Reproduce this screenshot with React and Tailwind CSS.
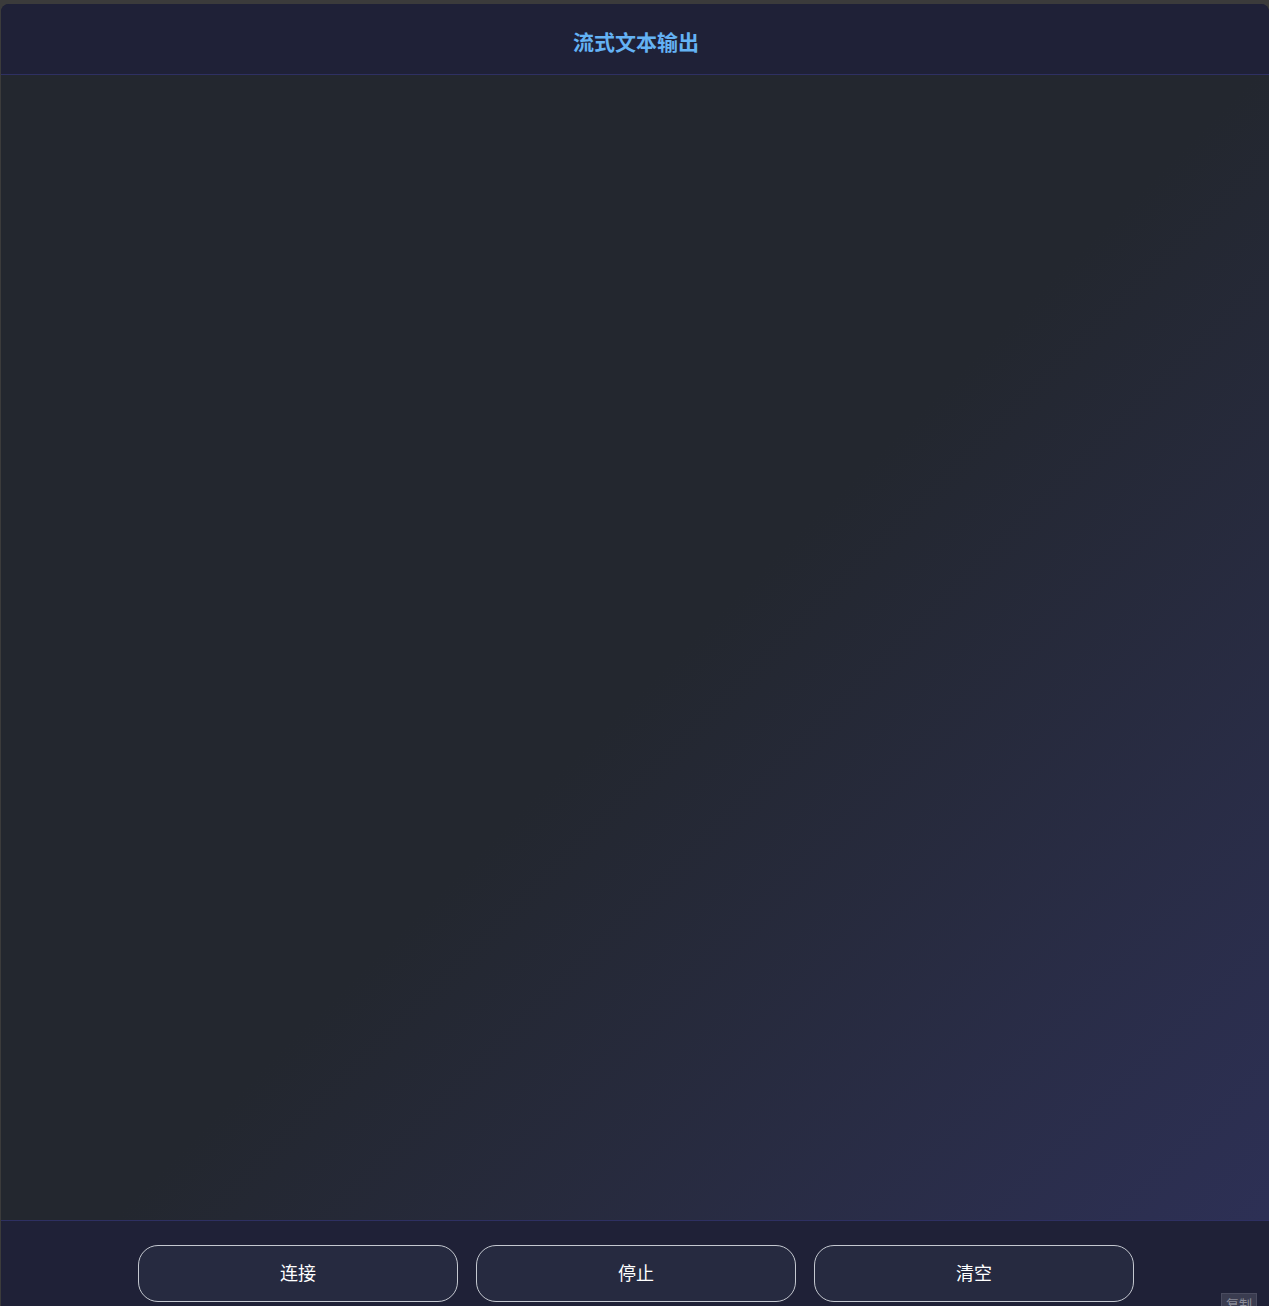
export default function App() {
  const buttons = ["连接", "停止", "清空"];

  return (
    <div
      className="min-h-screen bg-[#3b3b3b] pt-1 pl-px"
      style={{ fontFamily: '"Noto Sans", "Noto Sans CJK SC", sans-serif' }}
    >
      <div className="rounded-t-lg overflow-hidden flex flex-col bg-[#1f2137]">
        {/* Header */}
        <div className="h-[71px] pt-2 pl-[2px] flex items-center justify-center border-b border-[#2e3062] bg-[#1f2137]">
          <h1 className="text-[21px] font-bold text-[#64b2f4]">
            流式文本输出
          </h1>
        </div>

        {/* Output area */}
        <div className="h-[1145px] bg-[linear-gradient(135deg,#23272f_0%,#23272f_52%,#2d3055_100%)]" />

        {/* Controls */}
        <div className="relative border-t border-[#2e3062] bg-[#1f2137] pt-6 pb-6 pl-[2px] flex justify-center gap-[18px]">
          {buttons.map((label) => (
            <button
              key={label}
              className="w-[320px] h-[57px] rounded-[20px] border border-[#c4c8d0] bg-[#262a40] text-white text-[18px] flex items-center justify-center"
            >
              {label}
            </button>
          ))}
          <span className="absolute right-[12px] top-[72px] w-[36px] h-[22px] border border-[#4a4c60] bg-[#3a3c50] text-[#8a8c99] text-[13px] leading-[20px] text-center">
            复制
          </span>
        </div>
      </div>
    </div>
  );
}
